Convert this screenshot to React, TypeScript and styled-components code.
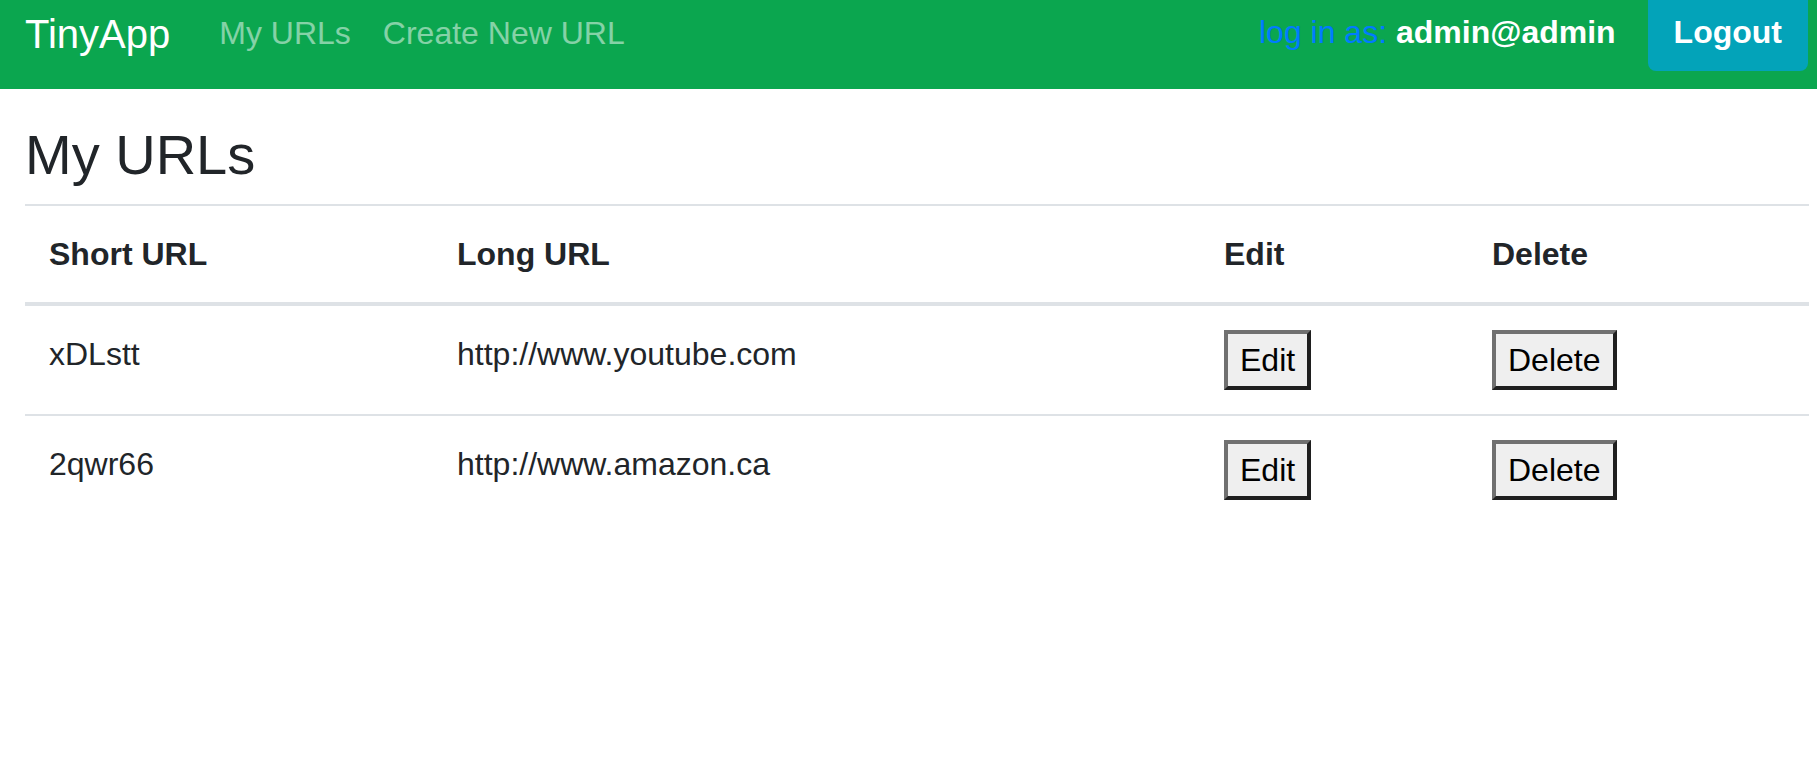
import React from "react";
import styled, { createGlobalStyle } from "styled-components";

const GlobalStyle = createGlobalStyle`
  html, body {
    margin: 0;
    padding: 0;
    background: #ffffff;
  }
  body {
    font-family: "Liberation Sans", Arial, Helvetica, sans-serif;
    font-size: 32px;
    line-height: 48px;
    color: #212529;
  }
  * { box-sizing: border-box; }
`;

const NavBar = styled.nav`
  display: flex;
  align-items: flex-start;
  height: 89px;
  padding: 0 9px 0 25px;
  background: #0ba64f;
`;

const Brand = styled.a`
  font-size: 40px;
  line-height: 60px;
  padding-top: 4px;
  margin-right: 33px;
  color: #ffffff;
  text-decoration: none;
`;

const NavLinks = styled.div`
  display: flex;
`;

const NavLink = styled.a`
  font-size: 32px;
  line-height: 48px;
  padding: 9px 16px 0;
  color: rgba(255, 255, 255, 0.5);
  text-decoration: none;
`;

const RightSide = styled.div`
  margin-left: auto;
  display: flex;
  align-items: flex-start;
`;

const LoginText = styled.span`
  font-size: 32px;
  line-height: 48px;
  padding-top: 8px;
  color: #007bff;
`;

const UserName = styled.b`
  color: #ffffff;
  font-weight: 700;
`;

const LogoutButton = styled.button`
  margin-left: 32px;
  height: 71px;
  padding: 8px 26px 15px;
  font-family: inherit;
  font-size: 32px;
  line-height: 48px;
  font-weight: 700;
  color: #ffffff;
  background: #03a3b9;
  border: none;
  border-radius: 0 0 8px 8px;
  cursor: pointer;
`;

const Main = styled.main`
  padding: 32px 8px 0 25px;
`;

const Title = styled.h1`
  margin: 0 0 16px;
  font-size: 56px;
  line-height: 67.2px;
  font-weight: 500;
  color: #212529;
`;

const Table = styled.table`
  width: 100%;
  border-collapse: collapse;
  table-layout: fixed;
  color: #212529;
`;

const HeadCell = styled.th`
  text-align: left;
  font-weight: 700;
  padding: 24px;
  border-top: 2px solid #dee2e6;
  border-bottom: 4px solid #dee2e6;
  vertical-align: bottom;
`;

const Cell = styled.td`
  padding: 24px;
  border-top: 2px solid #dee2e6;
  vertical-align: top;
`;

const TableButton = styled.button`
  font-family: inherit;
  font-size: 32px;
  line-height: 48px;
  padding: 2px 12px;
  color: #000000;
  background: #efefef;
  border-style: solid;
  border-width: 4px;
  border-color: #707070 #1f1f1f #1f1f1f #707070;
  border-radius: 0;
  cursor: pointer;
`;

const urls = [
  { short: "xDLstt", long: "http://www.youtube.com" },
  { short: "2qwr66", long: "http://www.amazon.ca" },
];

export default function App() {
  return (
    <>
      <GlobalStyle />
      <NavBar>
        <Brand href="#">TinyApp</Brand>
        <NavLinks>
          <NavLink href="#">My URLs</NavLink>
          <NavLink href="#">Create New URL</NavLink>
        </NavLinks>
        <RightSide>
          <LoginText>
            log in as: <UserName>admin@admin</UserName>
          </LoginText>
          <LogoutButton>Logout</LogoutButton>
        </RightSide>
      </NavBar>
      <Main>
        <Title>My URLs</Title>
        <Table>
          <colgroup>
            <col style={{ width: 408 }} />
            <col style={{ width: 767 }} />
            <col style={{ width: 268 }} />
            <col />
          </colgroup>
          <thead>
            <tr>
              <HeadCell>Short URL</HeadCell>
              <HeadCell>Long URL</HeadCell>
              <HeadCell>Edit</HeadCell>
              <HeadCell>Delete</HeadCell>
            </tr>
          </thead>
          <tbody>
            {urls.map((u) => (
              <tr key={u.short}>
                <Cell>{u.short}</Cell>
                <Cell>{u.long}</Cell>
                <Cell>
                  <TableButton>Edit</TableButton>
                </Cell>
                <Cell>
                  <TableButton>Delete</TableButton>
                </Cell>
              </tr>
            ))}
          </tbody>
        </Table>
      </Main>
    </>
  );
}
